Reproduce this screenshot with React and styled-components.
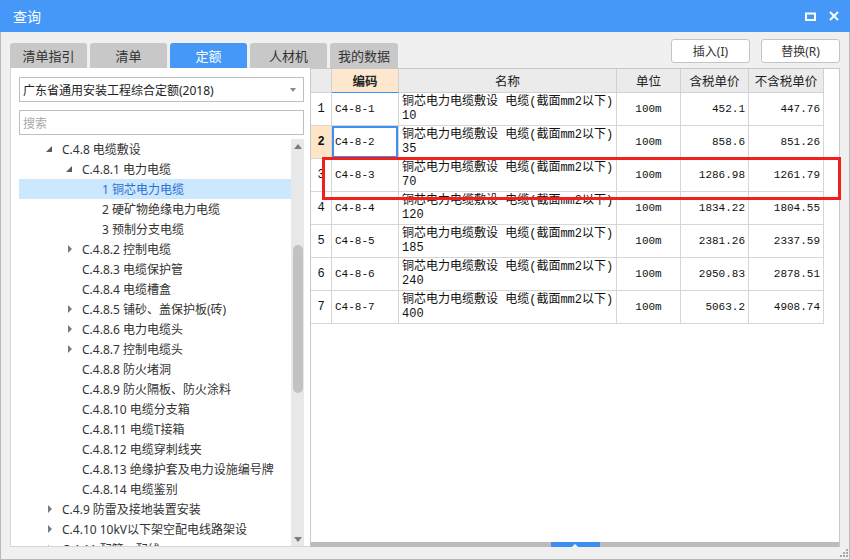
import styled, { createGlobalStyle } from "styled-components";

const UI_FONT = `"Noto Sans", "Noto Sans CJK SC", sans-serif`;
const GRID_FONT = `"Liberation Mono", "Noto Sans CJK SC", monospace`;

const GlobalStyle = createGlobalStyle`
  html, body {
    margin: 0;
    padding: 0;
    background: #f0f0f0;
  }
  * {
    box-sizing: border-box;
  }
`;

const Window = styled.div`
  position: relative;
  width: 850px;
  height: 560px;
  display: flex;
  flex-direction: column;
  background: #f0f0f0;
  font-family: ${UI_FONT};
  font-size: 12px;
  color: #333;
  overflow: hidden;
`;

const TitleBar = styled.div`
  height: 32px;
  flex-shrink: 0;
  display: flex;
  align-items: center;
  justify-content: space-between;
  padding: 0 11px 0 13px;
  background: #4598f8;
  color: #fff;
  font-size: 14px;
`;

const TitleIcons = styled.div`
  display: flex;
  align-items: center;
  gap: 13px;
`;

const Body = styled.div`
  flex: 1;
  display: flex;
  flex-direction: column;
  padding: 0 9px 12px 9px;
  border: 1px solid #b9b9b9;
  border-top: none;
`;

const Toolbar = styled.div`
  height: 36px;
  flex-shrink: 0;
  display: flex;
  align-items: flex-end;
  justify-content: space-between;
`;

const Tabs = styled.div`
  display: flex;
  gap: 3px;
`;

const Tab = styled.div`
  width: ${(p) => p.$w || 77}px;
  height: 25px;
  display: flex;
  align-items: center;
  justify-content: center;
  border-radius: 3px 3px 0 0;
  background: ${(p) => (p.$active ? "#4598f8" : "#c8c8c8")};
  color: ${(p) => (p.$active ? "#fff" : "#333")};
  font-size: 13px;
`;

const Buttons = styled.div`
  display: flex;
  gap: 11px;
  margin-bottom: 5px;
`;

const Button = styled.div`
  width: 79px;
  height: 24px;
  display: flex;
  align-items: center;
  justify-content: center;
  background: #fff;
  border: 1px solid #c4c4c4;
  border-radius: 3px;
  color: #333;
`;

const Content = styled.div`
  height: 479px;
  display: flex;
`;

const LeftPanel = styled.div`
  width: 300px;
  display: flex;
  flex-direction: column;
  background: #fff;
  border: 1px solid #d5d5d5;
  border-top: none;
  border-right: none;
  padding: 9px 6px 0 8px;
`;

const Select = styled.div`
  height: 25px;
  flex-shrink: 0;
  display: flex;
  align-items: center;
  justify-content: space-between;
  padding: 0 7px 0 3px;
  border: 1px solid #bfbfbf;
  color: #222;
`;

const SelectArrow = styled.span`
  width: 0;
  height: 0;
  border-left: 3px solid transparent;
  border-right: 3px solid transparent;
  border-top: 4px solid #8a8a8a;
`;

const Search = styled.div`
  height: 25px;
  flex-shrink: 0;
  margin-top: 8px;
  display: flex;
  align-items: center;
  padding-left: 3px;
  border: 1px solid #bfbfbf;
  color: #a8a8a8;
`;

const TreeArea = styled.div`
  flex: 1;
  min-height: 0;
  display: flex;
  margin-top: 4px;
`;

const TreeList = styled.div`
  flex: 1;
  overflow: hidden;
`;

const TreeRow = styled.div`
  height: 20px;
  display: flex;
  align-items: center;
  padding-left: ${(p) => 24 + p.$level * 20}px;
  background: ${(p) => (p.$selected ? "#cce8ff" : "transparent")};
  color: ${(p) => (p.$selected ? "#2a6fcf" : "#333")};
  white-space: nowrap;
`;

const Toggle = styled.span`
  width: 19px;
  flex-shrink: 0;
  display: flex;
  align-items: center;
  padding-left: ${(p) => (p.$open ? 3 : 5)}px;
`;

const OpenArrow = styled.span`
  width: 0;
  height: 0;
  border-left: 6px solid transparent;
  border-bottom: 6px solid #5c5c5c;
`;

const ClosedArrow = styled.span`
  width: 0;
  height: 0;
  border-top: 4px solid transparent;
  border-bottom: 4px solid transparent;
  border-left: 4px solid #7a7a7a;
`;

const VScroll = styled.div`
  width: 13px;
  flex-shrink: 0;
  display: flex;
  flex-direction: column;
  align-items: center;
  background: #e8e8e8;
`;

const ScrollBtn = styled.div`
  height: 14px;
  flex-shrink: 0;
  display: flex;
  align-items: center;
  justify-content: center;
`;

const ArrowUp = styled.span`
  width: 0;
  height: 0;
  border-left: 4px solid transparent;
  border-right: 4px solid transparent;
  border-bottom: 5px solid #7c7c7c;
`;

const ArrowDown = styled.span`
  width: 0;
  height: 0;
  border-left: 4px solid transparent;
  border-right: 4px solid transparent;
  border-top: 5px solid #7c7c7c;
`;

const ScrollTrack = styled.div`
  flex: 1;
  padding-top: 92px;
`;

const ScrollThumb = styled.div`
  width: 10px;
  height: 148px;
  border-radius: 5px;
  background: #c2c2c2;
`;

const RightPanel = styled.div`
  position: relative;
  width: 530px;
  display: flex;
  flex-direction: column;
  background: #fff;
  border: 1px solid #c8c8c8;
  border-bottom: none;
`;

const Grid = styled.div`
  flex: 1;
  display: grid;
  grid-template-columns: 21px 67px 218px 64px 68px 75px;
  grid-template-rows: 24px;
  grid-auto-rows: 33px;
  align-content: start;
  width: 513px;
`;

const HeadCell = styled.div`
  display: flex;
  align-items: center;
  justify-content: center;
  background: ${(p) => (p.$current ? "#fde8cf" : "#ebebeb")};
  border-right: 1px solid #d2d2d2;
  border-bottom: ${(p) => (p.$current ? "1px solid #3d8ef0" : "1px solid #d2d2d2")};
  font-family: "Noto Sans CJK SC", sans-serif;
  font-size: 12.5px;
  font-weight: ${(p) => (p.$current ? 700 : 400)};
  color: #222;
`;

const Cell = styled.div`
  display: flex;
  flex-direction: column;
  justify-content: center;
  align-items: ${(p) => p.$align || "flex-start"};
  padding: 0 3px;
  border-right: 1px solid #d6d6d6;
  border-bottom: 1px solid #d6d6d6;
  font-family: ${GRID_FONT};
  font-size: ${(p) => p.$size || 11}px;
  line-height: 14px;
  color: #111;
  white-space: nowrap;
  background: ${(p) => (p.$marked ? "#fde5c6" : "#fff")};
  font-weight: ${(p) => (p.$marked ? 700 : 400)};
  box-shadow: ${(p) => (p.$focus ? "inset 0 0 0 2px #3f90f2" : "none")};
`;

const HScroll = styled.div`
  height: 5px;
  flex-shrink: 0;
  display: flex;
  justify-content: center;
  background: #bcbcbc;
`;

const HThumb = styled.div`
  width: 49px;
  display: flex;
  align-items: flex-end;
  justify-content: center;
  background: #3d8ef0;
`;

const HThumbArrow = styled.span`
  width: 0;
  height: 0;
  border-left: 3px solid transparent;
  border-right: 3px solid transparent;
  border-bottom: 3px solid #fff;
`;

const Highlight = styled.div`
  position: absolute;
  left: 11px;
  top: 88px;
  width: 519px;
  height: 43px;
  border: 3px solid #f21f1c;
  pointer-events: none;
`;

const Grip = styled.svg`
  position: absolute;
  right: 2px;
  bottom: 3px;
`;

const tabs = [
  { label: "清单指引" },
  { label: "清单" },
  { label: "定额", active: true },
  { label: "人材机" },
  { label: "我的数据", w: 68 },
];

const tree = [
  { level: 0, text: "C.4.8 电缆敷设", open: true },
  { level: 1, text: "C.4.8.1 电力电缆", open: true },
  { level: 2, text: "1 铜芯电力电缆", selected: true },
  { level: 2, text: "2 硬矿物绝缘电力电缆" },
  { level: 2, text: "3 预制分支电缆" },
  { level: 1, text: "C.4.8.2 控制电缆", closed: true },
  { level: 1, text: "C.4.8.3 电缆保护管" },
  { level: 1, text: "C.4.8.4 电缆槽盒" },
  { level: 1, text: "C.4.8.5 铺砂、盖保护板(砖)", closed: true },
  { level: 1, text: "C.4.8.6 电力电缆头", closed: true },
  { level: 1, text: "C.4.8.7 控制电缆头", closed: true },
  { level: 1, text: "C.4.8.8 防火堵洞" },
  { level: 1, text: "C.4.8.9 防火隔板、防火涂料" },
  { level: 1, text: "C.4.8.10 电缆分支箱" },
  { level: 1, text: "C.4.8.11 电缆T接箱" },
  { level: 1, text: "C.4.8.12 电缆穿刺线夹" },
  { level: 1, text: "C.4.8.13 绝缘护套及电力设施编号牌" },
  { level: 1, text: "C.4.8.14 电缆鉴别" },
  { level: 0, text: "C.4.9 防雷及接地装置安装", closed: true },
  { level: 0, text: "C.4.10 10kV以下架空配电线路架设", closed: true },
  { level: 0, text: "C.4.11 配管、配线", closed: true },
];

const rows = [
  ["C4-8-1", "10", "452.1", "447.76"],
  ["C4-8-2", "35", "858.6", "851.26"],
  ["C4-8-3", "70", "1286.98", "1261.79"],
  ["C4-8-4", "120", "1834.22", "1804.55"],
  ["C4-8-5", "185", "2381.26", "2337.59"],
  ["C4-8-6", "240", "2950.83", "2878.51"],
  ["C4-8-7", "400", "5063.2", "4908.74"],
];

function App() {
  return (
    <Window>
      <GlobalStyle />
      <TitleBar>
        <span>查询</span>
        <TitleIcons>
          <svg width="11" height="9" viewBox="0 0 11 9">
            <rect x="1" y="1.5" width="9" height="6.5" fill="none" stroke="#fff" strokeWidth="2" />
          </svg>
          <svg width="10" height="10" viewBox="0 0 10 10">
            <path d="M1 1 L9 9 M9 1 L1 9" stroke="#fff" strokeWidth="2" />
          </svg>
        </TitleIcons>
      </TitleBar>
      <Body>
        <Toolbar>
          <Tabs>
            {tabs.map((t) => (
              <Tab key={t.label} $active={t.active} $w={t.w}>
                {t.label}
              </Tab>
            ))}
          </Tabs>
          <Buttons>
            <Button>插入(I)</Button>
            <Button>替换(R)</Button>
          </Buttons>
        </Toolbar>
        <Content>
          <LeftPanel>
            <Select>
              <span>广东省通用安装工程综合定额(2018)</span>
              <SelectArrow />
            </Select>
            <Search>搜索</Search>
            <TreeArea>
              <TreeList>
                {tree.map((n) => (
                  <TreeRow key={n.text} $level={n.level} $selected={n.selected}>
                    <Toggle $open={n.open}>
                      {n.open && <OpenArrow />}
                      {n.closed && <ClosedArrow />}
                    </Toggle>
                    {n.text}
                  </TreeRow>
                ))}
              </TreeList>
              <VScroll>
                <ScrollBtn>
                  <ArrowUp />
                </ScrollBtn>
                <ScrollTrack>
                  <ScrollThumb />
                </ScrollTrack>
                <ScrollBtn>
                  <ArrowDown />
                </ScrollBtn>
              </VScroll>
            </TreeArea>
          </LeftPanel>
          <RightPanel>
            <Grid>
              <HeadCell />
              <HeadCell $current>编码</HeadCell>
              <HeadCell>名称</HeadCell>
              <HeadCell>单位</HeadCell>
              <HeadCell>含税单价</HeadCell>
              <HeadCell>不含税单价</HeadCell>
              {rows.map((r, i) => [
                <Cell key={`n${i}`} $align="center" $size={12} $marked={i === 1}>
                  {i + 1}
                </Cell>,
                <Cell key={`c${i}`} $focus={i === 1}>
                  {r[0]}
                </Cell>,
                <Cell key={`m${i}`} $size={12}>
                  <span>铜芯电力电缆敷设 电缆(截面mm2以下)</span>
                  <span>{r[1]}</span>
                </Cell>,
                <Cell key={`u${i}`} $align="center">
                  100m
                </Cell>,
                <Cell key={`p${i}`} $align="flex-end">
                  {r[2]}
                </Cell>,
                <Cell key={`q${i}`} $align="flex-end">
                  {r[3]}
                </Cell>,
              ])}
            </Grid>
            <HScroll>
              <HThumb>
                <HThumbArrow />
              </HThumb>
            </HScroll>
            <Highlight />
          </RightPanel>
        </Content>
      </Body>
      <Grip width="10" height="10" viewBox="0 0 10 10">
        {[
          [8, 2],
          [5, 5],
          [8, 5],
          [2, 8],
          [5, 8],
          [8, 8],
        ].map(([x, y]) => (
          <rect key={`${x}-${y}`} x={x} y={y} width="2" height="2" fill="#a8a8a8" />
        ))}
      </Grip>
    </Window>
  );
}

export default App;
